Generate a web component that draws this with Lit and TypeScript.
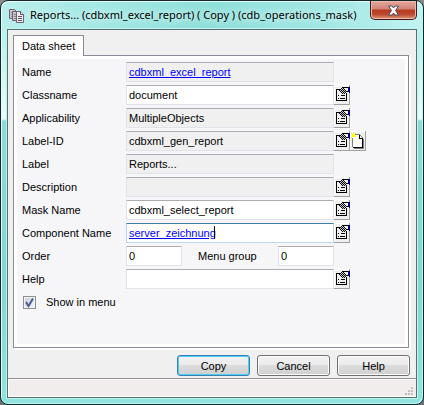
import { LitElement, html, css, svg, nothing } from "lit";
import { customElement, property } from "lit/decorators.js";
import { classMap } from "lit/directives/class-map.js";

interface Field {
  id: string;
  label: string;
  value: string;
  readonly?: boolean;
  link?: boolean;
  active?: boolean;
  lookup?: boolean;
  create?: boolean;
}

const fields: Field[] = [
  { id: "name", label: "Name", value: "cdbxml_excel_report", readonly: true, link: true },
  { id: "classname", label: "Classname", value: "document", lookup: true },
  { id: "applicability", label: "Applicability", value: "MultipleObjects", readonly: true, lookup: true },
  { id: "label-id", label: "Label-ID", value: "cdbxml_gen_report", readonly: true, lookup: true, create: true },
  { id: "label", label: "Label", value: "Reports...", readonly: true },
  { id: "description", label: "Description", value: "", readonly: true, lookup: true },
  { id: "mask", label: "Mask Name", value: "cdbxml_select_report", lookup: true },
  { id: "component", label: "Component Name", value: "server_zeichnung", link: true, active: true, lookup: true },
];

const lookupIcon = svg`
  <path d="M2 4h4v1h-4z M2 4h1v12h-1z M2 15h11v1h-11z M12 8h1v8h-1z" fill="#000"/>
  <path d="M7 3h1v-1h6v1h-6v1h-1z M12 6h2v1h-2z M4 10h1v1h-1z M7 10h4v1h-4z M4 13h1v1h-1z M6 13h5v1h-5z" fill="#000"/>
  <path d="M7 3h2v1h2v1h1v1h1v1h-1v1h-1v1h-2v-1h-2v-1h-1v-1h-1v-1h1v-1h1z" fill="#c4c4c4"/>
  <path d="M7 3h1v1h-1z M9 3h1v1h-1z M6 4h1v1h-1z M8 4h1v1h-1z M10 4h1v1h-1z M5 5h1v1h-1z M7 5h1v1h-1z M9 5h1v1h-1z M11 5h1v1h-1z M6 6h1v1h-1z M8 6h1v1h-1z M10 6h1v1h-1z M12 6h1v1h-1z M7 7h1v1h-1z M9 7h1v1h-1z M11 7h1v1h-1z M8 8h1v1h-1z M10 8h1v1h-1z" fill="#000"/>
  <path d="M14 2h2v6h-1v-1h-1z" fill="#000080"/>`;

const createIcon = svg`
  <path d="M3 4h7l3 4v9h-10z" fill="#fff"/>
  <path d="M5 3h5v1h-5z M2 7h1v9h-1z M10 4h1v1h-1z M11 5h1v1h-1z M12 6h1v1h-1z" fill="#808080"/>
  <path d="M9 4h1v3h3v1h-4z M3 16h10v1h-10z M12 7h1v10h-1z" fill="#000"/>
  <path d="M4 17h10v1h-10z M13 8h1v10h-1z" fill="#808080"/>
  <path d="M2 3h3v3h-3z M1 2h1v1h-1z M5 2h1v1h-1z M1 6h1v1h-1z M5 5h1v1h-1z M3 2h1v1h-1z" fill="#ff0"/>`;

@customElement("tool-button")
export class ToolButton extends LitElement {
  @property() kind = "lookup";
  @property() name = "";

  static styles = css`
    :host { display: block; }
    button {
      display: block;
      width: 16px;
      height: 20px;
      padding: 0;
      border: 0;
      background: #efefef;
      box-shadow: inset -1px -1px #a0a0a0, inset 1px 1px #fff;
    }
    svg { display: block; shape-rendering: crispEdges; }
  `;

  render() {
    return html`<button type="button" aria-label=${this.name}>
      <svg width="16" height="20" viewBox="0 0 16 20" aria-hidden="true">
        ${this.kind === "create" ? createIcon : lookupIcon}
      </svg>
    </button>`;
  }
}

@customElement("app-root")
export class AppRoot extends LitElement {
  static styles = css`
    * { box-sizing: border-box; }
    :host {
      display: block;
      background: linear-gradient(#8c8c8c, #6d7273);
      font-family: "Liberation Sans", Arial, sans-serif;
      font-size: 11px;
      line-height: 14px;
      color: #000;
    }
    .window {
      display: flex;
      flex-direction: column;
      min-height: 100vh;
      padding: 0 6px 6px;
      border: 1px solid #152628;
      border-radius: 8px;
      background:
        linear-gradient(90deg, #b9efec 0, #a5e9e5 20%, #8edfda 50%, #a2e7e4 78%, #c0f4f2 100%) top / 100% 29px no-repeat,
        linear-gradient(#c0f3f0 0, #b9f2ef 40px, #edfbfa 118px, #8cdbd7 120px, #82d7d3 70%, #90e5e1 100%);
      box-shadow: inset 1px 1px #e4fbfa, inset -1px -1px #baf7f5;
    }
    .titlebar {
      display: flex;
      height: 28px;
      padding-left: 1px;
    }
    .app-icon { margin: 6px 5px 0 0; flex: none; }
    h1 {
      flex: 1;
      min-width: 0;
      margin: 6px 0 0;
      font: 11px/16px "Noto Sans", "Open Sans", sans-serif;
      white-space: nowrap;
      text-shadow: 0 0 6px #e4fbfa, 0 0 8px #d9f8f6;
    }
    .close {
      flex: none;
      width: 47px;
      height: 19px;
      padding: 0;
      border: 1px solid #43191a;
      border-top: 0;
      border-radius: 0 0 5px 5px;
      background: linear-gradient(#e4a99d 0, #d08374 45%, #b8391f 50%, #be4a30 75%, #de9a7a 100%);
      box-shadow: inset 0 0 0 1px #ecb9ad;
    }
    .close svg { display: block; margin: 0 auto; }
    .client {
      flex: 1;
      display: flex;
      flex-direction: column;
      border: 1px solid #52716f;
      background: #f0f0f0;
      box-shadow: 0 0 0 1px #c3f1ee;
    }
    form {
      flex: 1;
      display: flex;
      flex-direction: column;
      padding: 5px 6px 2px 5px;
    }
    .tab {
      align-self: flex-start;
      position: relative;
      height: 21px;
      margin-bottom: -1px;
      padding: 0 8px;
      border: 1px solid #898c95;
      border-bottom: 0;
      background: #fff;
      font: inherit;
    }
    .panel {
      flex: 1;
      margin-right: 1px;
      padding: 6px 8px 0 5px;
      border: 1px solid #898c95;
      background: #f6f6f9;
      box-shadow: inset 0 0 0 3px #fff, 2px 2px #fff;
    }
    .row {
      display: flex;
      align-items: center;
      height: 20px;
      margin-bottom: 3px;
      padding-left: 3px;
    }
    .row > label { flex: none; width: 104px; }
    .field { position: relative; flex: 0 1 208px; min-width: 0; }
    input.text {
      display: block;
      width: 100%;
      height: 20px;
      padding: 0 2px;
      border: 1px solid #e2e3ea;
      border-top-color: #abadb3;
      border-radius: 1px;
      background: #fff;
      font: inherit;
      color: #000;
      outline: none;
    }
    input.readonly { background: #f0f0f0; }
    input.link { color: #0000ff; text-decoration: underline; }
    input.active { border-color: #b5cfe7 #b7d9ed #b7d9ed #b5cfe7; border-top-color: #3d7bad; }
    .caret {
      position: absolute;
      top: 3px;
      left: 88px;
      width: 1px;
      height: 13px;
      background: #000;
    }
    .pair { display: flex; align-items: center; flex: 0 1 208px; }
    .pair label { flex: 1; padding-left: 16px; }
    .pair input.text { flex: none; width: 56px; }
    .check { gap: 10px; padding-left: 4px; }
    .row.check label { width: auto; }
    .check input {
      appearance: none;
      position: relative;
      width: 13px;
      height: 13px;
      margin: 0;
      border: 1px solid #8e8f8f;
      background: linear-gradient(135deg, #c8cdd6, #f4f5f7);
      box-shadow: inset 0 0 0 1px #f4f4f4;
    }
    .tick { display: grid; }
    .tick > * { grid-area: 1 / 1; }
    .tick svg { position: relative; pointer-events: none; }
    .actions {
      display: flex;
      justify-content: flex-end;
      gap: 7px;
      padding-top: 7px;
    }
    .actions button {
      width: 73px;
      height: 21px;
      padding: 0;
      border: 1px solid #707070;
      border-radius: 3px;
      background: linear-gradient(#f2f2f2 0, #ebebeb 49%, #dddddd 50%, #cfcfcf 100%);
      box-shadow: inset 0 0 0 1px #fcfcfc;
      font: inherit;
      color: #000;
    }
    .actions .default {
      border-color: #3c7fb1;
      box-shadow: inset 0 0 0 1px #48d0f5;
    }
    footer {
      display: flex;
      justify-content: flex-end;
      align-items: flex-end;
      height: 19px;
      padding: 0 2px 1px;
      border-top: 1px solid #8f8f8f;
      background: #f1edec;
      box-shadow: inset 0 1px #fff, inset 1px -1px #fff;
    }
  `;

  private input(id: string, value: string, f: Partial<Field> = {}) {
    return html`<input
      id=${id}
      type="text"
      spellcheck="false"
      class=${classMap({ text: true, readonly: !!f.readonly, link: !!f.link, active: !!f.active })}
      .value=${value}
      ?readonly=${!!f.readonly}
    />`;
  }

  private row(f: Field) {
    return html`<div class="row">
      <label for=${f.id}>${f.label}</label>
      <div class="field">
        ${this.input(f.id, f.value, f)}
        ${f.active ? html`<span class="caret"></span>` : nothing}
      </div>
      ${f.lookup ? html`<tool-button name="Browse"></tool-button>` : nothing}
      ${f.create ? html`<tool-button kind="create" name="New"></tool-button>` : nothing}
    </div>`;
  }

  render() {
    return html`<div class="window">
      <header class="titlebar">
        <svg class="app-icon" width="17" height="17" viewBox="0 0 17 17" aria-hidden="true">
          <g stroke="#6b6470" fill="#eeeaf0">
            <path d="M1.5 2.5h5l2 2v7h-7z" fill="#c9c3cb" />
            <path d="M3 5.5h3M3 7.5h4M3 9.5h4" stroke="#9b8f98" />
            <path d="M4.5 4.5h4l2 2v7h-6z" fill="#c9c3cb" />
            <path d="M6 7.5h2M6 9.5h3M6 11.5h3" stroke="#8c7f88" />
            <path d="M8.5 4.5h4l3 3v8h-7z" />
            <path d="M12.5 4.5v3h3M10 9.5h4M10 11.5h4M10 13.5h4" stroke="#5d5963" />
          </g>
        </svg>
        <h1>Reports... (cdbxml_excel_report) ( Copy ) (cdb_operations_mask)</h1>
        <button class="close" type="button" aria-label="Close">
          <svg width="13" height="11" viewBox="0 0 13 11" aria-hidden="true">
            <path d="M1.5 1h3.5l1.5 2 1.5-2h3.5l-3 4.500 3 4.500h-3.500l-1.500-2-1.500 2h-3.500l3-4.500z" fill="#fff" stroke="#4e4a5c" />
          </svg>
        </button>
      </header>
      <main class="client">
        <form>
          <button class="tab" type="button" role="tab" aria-selected="true">Data sheet</button>
          <div class="panel">
            ${fields.map((f) => this.row(f))}
            <div class="row">
              <label for="order">Order</label>
              <div class="pair">
                ${this.input("order", "0")}
                <label for="group">Menu group</label>
                ${this.input("group", "0")}
              </div>
            </div>
            ${this.row({ id: "help", label: "Help", value: "", lookup: true })}
            <div class="row check">
              <span class="tick">
                <input id="show" type="checkbox" checked />
                <svg width="13" height="13" viewBox="0 0 13 13" aria-hidden="true">
                  <path d="M3 6l2.500 4L10 2.500" fill="none" stroke="#4a5f97" stroke-width="2" />
                </svg>
              </span>
              <label for="show">Show in menu</label>
            </div>
          </div>
          <div class="actions">
            <button class="default" type="button">Copy</button>
            <button type="button">Cancel</button>
            <button type="button">Help</button>
          </div>
        </form>
        <footer>
          <svg width="10" height="10" viewBox="0 0 10 10" shape-rendering="crispEdges" aria-hidden="true">
            <path d="M7 1h2v2h-2z M4 4h2v2h-2z M7 4h2v2h-2z M1 7h2v2h-2z M4 7h2v2h-2z M7 7h2v2h-2z" fill="#c2bebd" />
          </svg>
        </footer>
      </main>
    </div>`;
  }
}
